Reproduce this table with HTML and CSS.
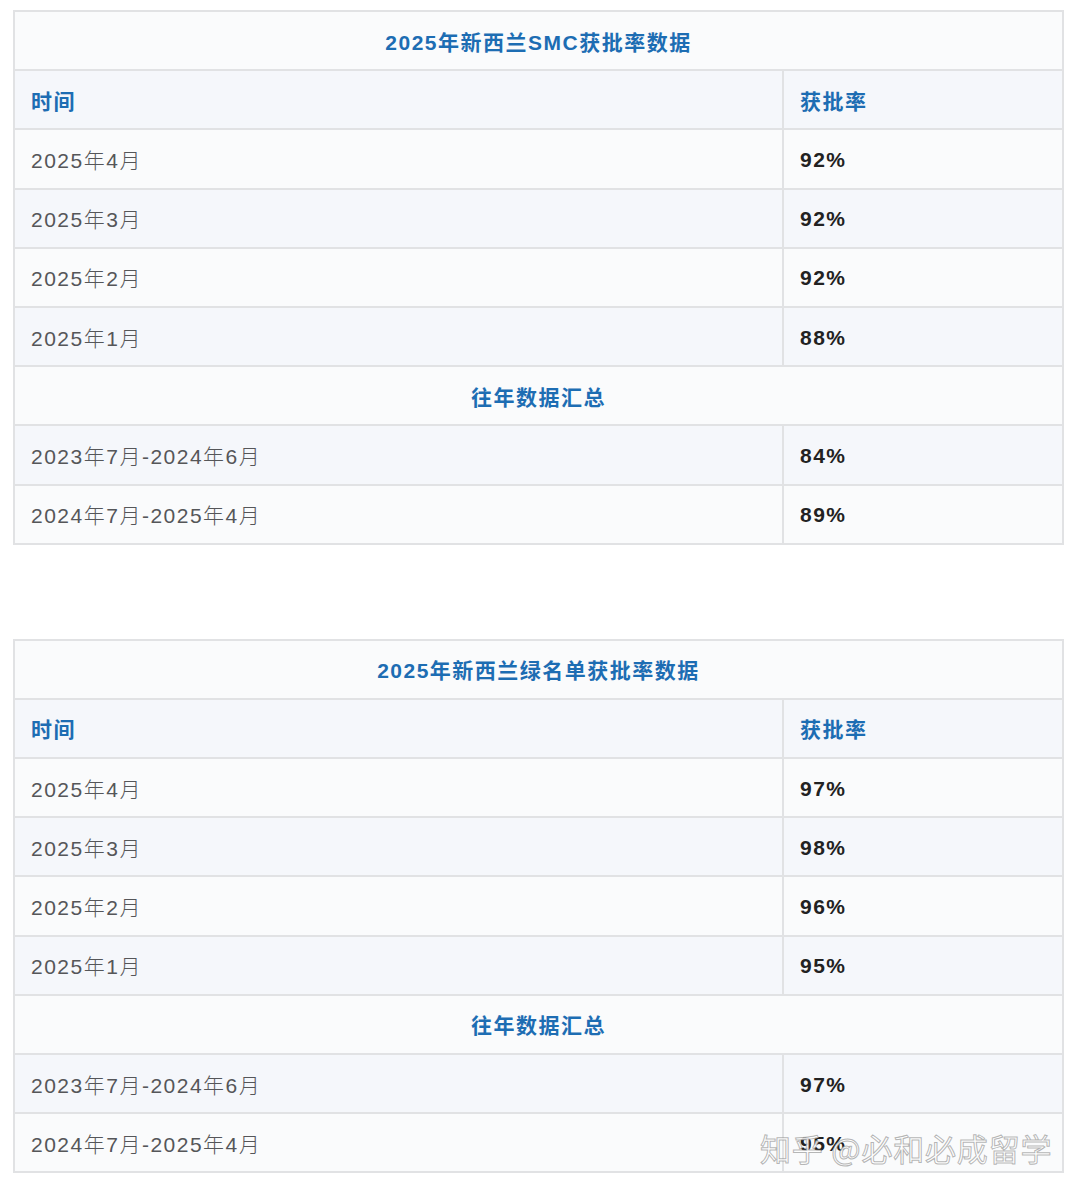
FILE: index.html
```html
<!DOCTYPE html>
<html lang="zh-CN">
<head>
<meta charset="utf-8">
<title>新西兰获批率数据</title>
<link rel="stylesheet" href="styles.css">
</head>
<body>
<div class="page">
  <table class="rate-table">
    <colgroup><col class="col-date"><col class="col-pct"></colgroup>
    <tr class="odd"><td class="title" colspan="2">2025年新西兰SMC获批率数据</td></tr>
    <tr class="even"><td class="head">时间</td><td class="head">获批率</td></tr>
    <tr class="odd"><td class="date">2025年4月</td><td class="pct">92%</td></tr>
    <tr class="even"><td class="date">2025年3月</td><td class="pct">92%</td></tr>
    <tr class="odd"><td class="date">2025年2月</td><td class="pct">92%</td></tr>
    <tr class="even"><td class="date">2025年1月</td><td class="pct">88%</td></tr>
    <tr class="odd"><td class="title" colspan="2">往年数据汇总</td></tr>
    <tr class="even"><td class="date">2023年7月-2024年6月</td><td class="pct">84%</td></tr>
    <tr class="odd"><td class="date">2024年7月-2025年4月</td><td class="pct">89%</td></tr>
  </table>

  <table class="rate-table second">
    <colgroup><col class="col-date"><col class="col-pct"></colgroup>
    <tr class="odd"><td class="title" colspan="2">2025年新西兰绿名单获批率数据</td></tr>
    <tr class="even"><td class="head">时间</td><td class="head">获批率</td></tr>
    <tr class="odd"><td class="date">2025年4月</td><td class="pct">97%</td></tr>
    <tr class="even"><td class="date">2025年3月</td><td class="pct">98%</td></tr>
    <tr class="odd"><td class="date">2025年2月</td><td class="pct">96%</td></tr>
    <tr class="even"><td class="date">2025年1月</td><td class="pct">95%</td></tr>
    <tr class="odd"><td class="title" colspan="2">往年数据汇总</td></tr>
    <tr class="even"><td class="date">2023年7月-2024年6月</td><td class="pct">97%</td></tr>
    <tr class="odd"><td class="date">2024年7月-2025年4月</td><td class="pct">95%</td></tr>
  </table>

  <div class="watermark">知乎 @必和必成留学</div>
</div>
</body>
</html>
```

FILE: styles.css
```css
* { box-sizing: border-box; }
html, body { margin: 0; padding: 0; background: #ffffff; }
body {
  font-family: "Liberation Sans", "Noto Sans CJK SC", sans-serif;
  width: 1080px;
  height: 1192px;
  overflow: hidden;
}
.page {
  position: relative;
  padding: 10px 0 0 13px;
  height: 1192px;
}
.rate-table {
  border-collapse: collapse;
  width: 1049px;
  table-layout: fixed;
  border: 2px solid #e1e2e4;
}
.col-date { width: 769px; }
.col-pct { width: 280px; }
.rate-table.second { margin-top: 94px; }
.rate-table td {
  border: 2px solid #e1e2e4;
  height: 59.2px;
  padding: 0 0 0 16px;
  font-size: 21px;
  letter-spacing: 1.5px;
  vertical-align: middle;
}
.odd td { background: #fafbfc; }
.even td { background: #f5f7fb; }
.title {
  text-align: center;
  color: #1d6db3;
  font-weight: bold;
  padding-left: 0 !important;
}
.head {
  color: #1d6db3;
  font-weight: bold;
}
.date {
  color: #555659;
  font-weight: 300;
}
.pct {
  color: #222222;
  font-weight: bold;
  padding-top: 2px !important;
}
.watermark {
  position: absolute;
  left: 760px;
  top: 1125px;
  font-family: "Noto Sans CJK SC", sans-serif;
  font-size: 31px;
  letter-spacing: 0.8px;
  color: rgba(255, 255, 255, 0.85);
  -webkit-text-stroke: 1px rgba(120, 120, 120, 0.55);
  white-space: nowrap;
}
```
